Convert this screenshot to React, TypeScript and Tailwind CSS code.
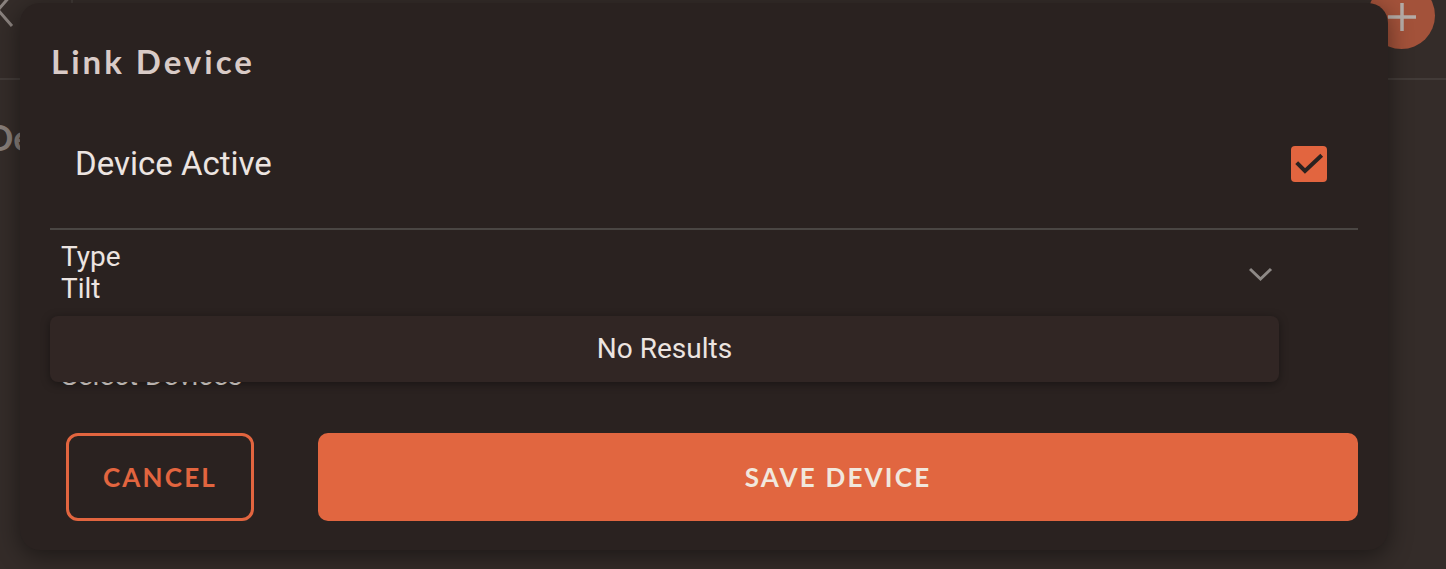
import React from "react";

export default function App() {
  return (
    <div className="relative w-[1446px] h-[569px] overflow-hidden bg-[#342c29]" style={{ fontFamily: "Roboto, 'Noto Sans', sans-serif" }}>
      {/* background page */}
      <div className="h-[80px] border-b-2 border-[#423b38] relative">
        <svg className="absolute left-[-8px] top-[-10px]" width="30" height="44" viewBox="0 0 30 44">
          <path d="M20 4 L6 20 L20 36" stroke="#8a827e" strokeWidth="3" fill="none" />
        </svg>
        <div className="absolute left-[71px] top-0 w-[2px] h-[10px] bg-[#3f3835]" />
        <div className="absolute left-[1368px] top-[-18px] w-[67px] h-[67px] rounded-full bg-[#a3523a] flex items-center justify-center">
          <svg width="30" height="30" viewBox="0 0 30 30" className="mt-[2px]">
            <path d="M15 1 V29 M1 15 H29" stroke="#b5aca7" strokeWidth="3.5" />
          </svg>
        </div>
      </div>
      <div className="pt-[30px] text-[36px] font-bold text-[#877e79] ml-[-14px]" style={{ fontFamily: "Lato, sans-serif" }}>Devices</div>

      {/* modal */}
      <div className="absolute left-[20px] top-[3px] w-[1368px] h-[547px] rounded-[20px] bg-[#2a2220] shadow-[0_6px_24px_rgba(0,0,0,0.45)] px-[30px] flex flex-col">
        <div className="pt-[38px] pl-[1px] h-[83px] text-[33px] leading-[40px] font-bold text-[#d9cbc7] tracking-[3px]" style={{ fontFamily: "Lato, sans-serif" }}>
          Link Device
        </div>
        <div className="h-[142px] flex items-center justify-between pl-[25px] pr-[31px] pt-[14px]">
          <span className="text-[33px] leading-[40px] text-[#ece4e0]">Device Active</span>
          <div className="w-[36px] h-[36px] rounded-[4px] bg-[#e2653f] flex items-center justify-center">
            <svg width="36" height="36" viewBox="0 0 36 36">
              <path d="M5.7 16.6 L14 25 L30.7 9.3" stroke="#2a2220" strokeWidth="4" fill="none" />
            </svg>
          </div>
        </div>
        <div className="h-[2px] bg-[#4a4643]" />
        <div className="relative">
          <div className="w-[1229px] flex items-center justify-between pl-[11px] pt-[11px] pr-[6px]">
            <div className="text-[28px] leading-[32px] text-[#ece4e0]">
              <div>Type</div>
              <div>Tilt</div>
            </div>
            <svg width="24" height="16" viewBox="0 0 24 16" className="mt-[2px]">
              <path d="M1 3 L11.5 13 L22 3" stroke="#8e8986" strokeWidth="3" fill="none" />
            </svg>
          </div>
          <div className="pl-[11px] pt-[55px] text-[28px] leading-[32px] text-[#e8e0dc]">Select Devices</div>
          <div className="absolute left-0 top-[86px] w-[1229px] h-[66px] rounded-[8px] bg-[#312624] shadow-[0_2px_10px_rgba(0,0,0,0.4)] flex items-center justify-center">
            <span className="text-[28px] text-[#ece4e0]">No Results</span>
          </div>
        </div>
        <div className="flex gap-[64px] mt-[41px] pl-[16px]">
          <button className="w-[188px] h-[88px] rounded-[12px] border-[3px] border-[#e2653f] text-[#e2653f] text-[26px] font-bold tracking-[2.2px]" style={{ fontFamily: "Lato, sans-serif" }}>
            CANCEL
          </button>
          <button className="flex-1 h-[88px] rounded-[10px] bg-[#e16640] text-[#f1e7dd] text-[26px] font-bold tracking-[2.2px]" style={{ fontFamily: "Lato, sans-serif" }}>
            SAVE DEVICE
          </button>
        </div>
      </div>
    </div>
  );
}
